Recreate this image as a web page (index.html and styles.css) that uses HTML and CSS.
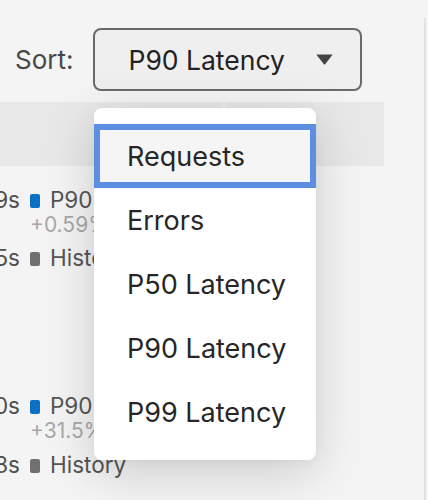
FILE: index.html
```html
<!DOCTYPE html>
<html lang="en">
<head>
<meta charset="utf-8">
<title>Sort</title>
<link rel="stylesheet" href="styles.css">
</head>
<body>
<div class="page">
  <div class="main">
    <div class="toolbar">
      <span class="sort-label">Sort:</span>
      <button class="select" type="button">
        <span class="select-value">P90 Latency</span>
        <svg class="caret" width="17" height="11" viewBox="0 0 17 11"><path d="M0.3 0.5 H16.7 L9.3 10 Q8.5 11 7.7 10 Z" fill="#444"/></svg>
      </button>
    </div>
    <div class="band">
      <div class="band-cell"></div>
      <div class="band-divider"></div>
      <div class="band-cell"></div>
    </div>
    <div class="legend legend-first">
      <span class="val">1.39s</span><span class="mark mark-blue"></span><span class="name">P90 Latency</span>
      <span class="sub">+0.59%</span>
      <span class="val gap">1.25s</span><span class="mark mark-gray gap"></span><span class="name gap">History</span>
    </div>
    <div class="legend legend-second">
      <span class="val">3.10s</span><span class="mark mark-blue"></span><span class="name">P90 Latency</span>
      <span class="sub">+31.5%</span>
      <span class="val gap">2.38s</span><span class="mark mark-gray gap"></span><span class="name gap">History</span>
    </div>
  </div>
  <div class="edge"></div>
</div>
<ul class="menu">
  <li class="item selected">Requests</li>
  <li class="item">Errors</li>
  <li class="item">P50 Latency</li>
  <li class="item">P90 Latency</li>
  <li class="item">P99 Latency</li>
</ul>
</body>
</html>
```
FILE: styles.css
```css
html, body {
  margin: 0;
  padding: 0;
}
body {
  width: 428px;
  height: 500px;
  overflow: hidden;
  background: #f4f4f4;
  font-family: Inter, "Noto Sans", sans-serif;
  position: relative;
}
.page {
  display: flex;
  height: 500px;
}
.main {
  width: 424px;
  overflow: hidden;
}
.edge {
  margin-top: 18px;
  width: 2px;
  border-left: 2px solid #e1e1e1;
  background: #f7f7f7;
}
.toolbar {
  display: flex;
  align-items: center;
  gap: 20px;
  padding: 28px 0 0 15px;
  height: 63px;
}
.sort-label {
  font-size: 26px;
  color: #474747;
}
.select {
  box-sizing: border-box;
  width: 269px;
  height: 63px;
  display: flex;
  align-items: center;
  justify-content: space-between;
  padding: 0 27px 0 33px;
  background: #efefef;
  border: 2px solid #6a6a6a;
  border-radius: 8px;
  font-family: inherit;
  font-size: 26.5px;
  color: #222;
}
.caret {
  display: block;
}
.band {
  margin-top: 11px;
  width: 384px;
  height: 64px;
  display: grid;
  grid-template-columns: 223px 2px 1fr;
}
.band-cell {
  background: #e8e8e8;
}
.band-divider {
  background: #f1f1f1;
}
.legend {
  display: grid;
  grid-template-columns: 60px 10px auto;
  column-gap: 10px;
  margin-left: -40px;
  align-items: baseline;
  white-space: nowrap;
}
.legend-first {
  margin-top: 21px;
}
.legend-second {
  margin-top: 122px;
}
.legend-second .gap {
  margin-top: 9px;
}
.val, .name {
  font-size: 22.5px;
  line-height: 26px;
  color: #555;
}
.val {
  text-align: right;
  color: #505050;
}
.mark {
  display: inline-block;
  width: 10px;
  height: 14px;
  border-radius: 2px;
}
.mark-blue {
  background: #0a70c4;
}
.mark-gray {
  background: #707070;
}
.sub {
  grid-column: 2 / 4;
  font-size: 21px;
  line-height: 24px;
  color: #a8a8a8;
}
.gap {
  margin-top: 8px;
}
.menu {
  position: absolute;
  left: 94px;
  top: 108px;
  width: 222px;
  margin: 0;
  padding: 16px 0;
  list-style: none;
  background: #fff;
  border-radius: 8px;
  box-shadow: 0 12px 50px rgba(0, 0, 0, 0.17), 0 2px 8px rgba(0, 0, 0, 0.04);
}
.item {
  box-sizing: border-box;
  height: 64px;
  display: flex;
  align-items: center;
  padding-left: 33px;
  font-size: 27px;
  color: #262626;
}
.item.selected {
  border: 6px solid #5c8fe2;
  padding-left: 27px;
  background: #f5f5f5;
}
```
